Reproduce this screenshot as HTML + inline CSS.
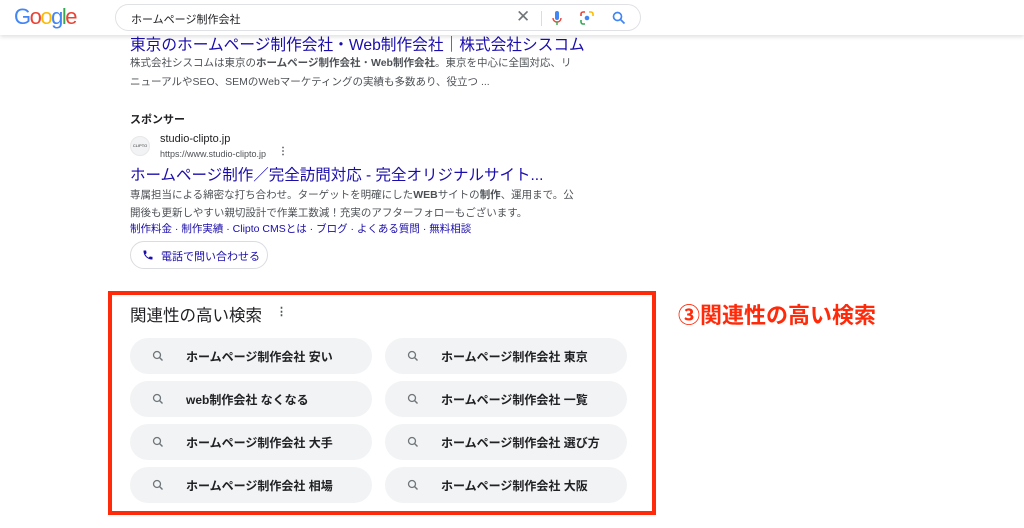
<!DOCTYPE html>
<html><head><meta charset="utf-8"><style>
*{margin:0;padding:0;box-sizing:border-box}
body{width:1024px;height:528px;overflow:hidden;background:#fff;font-family:"Liberation Sans","Noto Sans CJK JP",sans-serif;position:relative}
.a{position:absolute;white-space:nowrap}
.hdr{position:absolute;left:0;top:0;width:1024px;height:35px;background:#fff;box-shadow:0 2px 4px rgba(0,0,0,.12);z-index:2}
.sb{position:absolute;left:115px;top:4px;width:526px;height:27px;border:1px solid #dfe1e5;border-radius:14px;background:#fff}
.pill{position:absolute;width:242px;height:36px;border-radius:18px;background:#f1f3f4;font-size:12px;font-weight:bold;color:#202124}
.pill svg{position:absolute;left:22px;top:12px}
.pill span{position:absolute;left:56px;top:10px}
.g{color:#4d5156;font-size:10.5px;line-height:20px}
</style></head><body>
<div class="hdr">
<div class="a" style="left:14px;top:4px;font-size:22px;letter-spacing:-1.5px;font-family:'Liberation Sans',sans-serif"><span style="color:#4285f4">G</span><span style="color:#ea4335">o</span><span style="color:#fbbc05">o</span><span style="color:#4285f4">g</span><span style="color:#34a853">l</span><span style="color:#ea4335">e</span></div>
<div class="sb">
<div class="a" style="left:15px;top:6px;font-size:11px;color:#202124">ホームページ制作会社</div>
<div class="a" style="left:400px;top:2px;font-size:17px;color:#70757a">✕</div>
<div class="a" style="left:425px;top:6px;width:1px;height:15px;background:#dadce0"></div>
<svg class="a" style="left:436px;top:6px" width="10" height="15" viewBox="0 0 10 15"><rect x="3" y="0" width="4" height="9" rx="2" fill="#4285f4"/><path d="M1 7a4 4 0 0 0 8 0" stroke="#ea4335" stroke-width="1.4" fill="none"/><path d="M5 11v3" stroke="#34a853" stroke-width="1.4"/></svg>
<svg class="a" style="left:464px;top:6px" width="14" height="14" viewBox="0 0 14 14"><path d="M1 5V3a2 2 0 0 1 2-2h2" stroke="#ea4335" stroke-width="1.6" fill="none"/><path d="M9 1h2a2 2 0 0 1 2 2v2" stroke="#fbbc05" stroke-width="1.6" fill="none"/><path d="M1 9v2a2 2 0 0 0 2 2h2" stroke="#34a853" stroke-width="1.6" fill="none"/><circle cx="7" cy="7" r="2.3" fill="#4285f4"/></svg>
<svg class="a" style="left:496px;top:6px" width="14" height="14" viewBox="0 0 14 14"><circle cx="5.5" cy="5.5" r="4" stroke="#4285f4" stroke-width="1.7" fill="none"/><path d="M8.5 8.5l4 4" stroke="#4285f4" stroke-width="1.8"/></svg>
</div>
</div>
<div class="a" style="left:130px;top:32px;font-size:15.7px;color:#1a0dab">東京のホームページ制作会社・Web制作会社｜株式会社シスコム</div>
<div class="a g" style="left:130px;top:53px">株式会社シスコムは東京の<b>ホームページ制作会社</b>・<b>Web制作会社</b>。東京を中心に全国対応、リ</div>
<div class="a g" style="left:130px;top:72px">ニューアルやSEO、SEMのWebマーケティングの実績も多数あり、役立つ ...</div>
<div class="a" style="left:130px;top:111px;font-size:11px;font-weight:bold;color:#202124">スポンサー</div>
<div class="a" style="left:130px;top:136px;width:20px;height:20px;border-radius:50%;background:#f1f3f4;border:1px solid #e8e8e8;font-size:4px;text-align:center;line-height:18px;color:#333">CLIPTO</div>
<div class="a" style="left:160px;top:133px;font-size:11px;color:#202124">studio-clipto.jp</div>
<div class="a" style="left:160px;top:149px;font-size:9px;color:#4d5156">https://www.studio-clipto.jp</div>
<div class="a" style="left:278px;top:146px;font-size:10px;color:#4d5156;font-weight:bold">⋮</div>
<div class="a" style="left:130px;top:163px;font-size:15.5px;color:#1a0dab">ホームページ制作／完全訪問対応 - 完全オリジナルサイト...</div>
<div class="a g" style="left:130px;top:185px">専属担当による綿密な打ち合わせ。ターゲットを明確にした<b>WEB</b>サイトの<b>制作</b>、運用まで。公</div>
<div class="a g" style="left:130px;top:203px">開後も更新しやすい親切設計で作業工数減！充実のアフターフォローもございます。</div>
<div class="a" style="left:130px;top:221px;font-size:10.5px;color:#1a0dab">制作料金 · 制作実績 · Clipto CMSとは · ブログ · よくある質問 · 無料相談</div>
<div class="a" style="left:130px;top:241px;width:138px;height:28px;border:1px solid #dadce0;border-radius:14px;font-size:11px;color:#1a0dab">
<svg class="a" style="left:11px;top:7px" width="12" height="12" viewBox="0 0 24 24"><path fill="#1a0dab" d="M6.6 10.8a15 15 0 0 0 6.6 6.6l2.2-2.2c.3-.3.7-.4 1-.2 1.1.4 2.3.6 3.6.6.6 0 1 .4 1 1V20c0 .6-.4 1-1 1A17 17 0 0 1 3 4c0-.6.4-1 1-1h3.5c.6 0 1 .4 1 1 0 1.3.2 2.5.6 3.6.1.3 0 .7-.2 1z"/></svg>
<span class="a" style="left:30px;top:6px">電話で問い合わせる</span></div>
<div class="a" style="left:108px;top:291px;width:548px;height:224px;border:4px solid #ff2a0a"></div>
<div class="a" style="left:130px;top:302px;font-size:16.5px;color:#202124">関連性の高い検索</div>
<div class="a" style="left:276px;top:305px;font-size:11px;color:#4d5156;font-weight:bold">⋮</div>
<div class="a" style="left:678px;top:298px;font-size:22px;font-weight:bold;color:#ff2a0a">③関連性の高い検索</div>
<div class="pill" style="left:130px;top:338px"><svg width="12" height="12" viewBox="0 0 12 12"><circle cx="5" cy="5" r="3.5" stroke="#70757a" stroke-width="1.3" fill="none"/><path d="M7.5 7.5l3 3" stroke="#70757a" stroke-width="1.4"/></svg><span>ホームページ制作会社 安い</span></div>
<div class="pill" style="left:385px;top:338px"><svg width="12" height="12" viewBox="0 0 12 12"><circle cx="5" cy="5" r="3.5" stroke="#70757a" stroke-width="1.3" fill="none"/><path d="M7.5 7.5l3 3" stroke="#70757a" stroke-width="1.4"/></svg><span>ホームページ制作会社 東京</span></div>
<div class="pill" style="left:130px;top:381px"><svg width="12" height="12" viewBox="0 0 12 12"><circle cx="5" cy="5" r="3.5" stroke="#70757a" stroke-width="1.3" fill="none"/><path d="M7.5 7.5l3 3" stroke="#70757a" stroke-width="1.4"/></svg><span>web制作会社 なくなる</span></div>
<div class="pill" style="left:385px;top:381px"><svg width="12" height="12" viewBox="0 0 12 12"><circle cx="5" cy="5" r="3.5" stroke="#70757a" stroke-width="1.3" fill="none"/><path d="M7.5 7.5l3 3" stroke="#70757a" stroke-width="1.4"/></svg><span>ホームページ制作会社 一覧</span></div>
<div class="pill" style="left:130px;top:424px"><svg width="12" height="12" viewBox="0 0 12 12"><circle cx="5" cy="5" r="3.5" stroke="#70757a" stroke-width="1.3" fill="none"/><path d="M7.5 7.5l3 3" stroke="#70757a" stroke-width="1.4"/></svg><span>ホームページ制作会社 大手</span></div>
<div class="pill" style="left:385px;top:424px"><svg width="12" height="12" viewBox="0 0 12 12"><circle cx="5" cy="5" r="3.5" stroke="#70757a" stroke-width="1.3" fill="none"/><path d="M7.5 7.5l3 3" stroke="#70757a" stroke-width="1.4"/></svg><span>ホームページ制作会社 選び方</span></div>
<div class="pill" style="left:130px;top:467px"><svg width="12" height="12" viewBox="0 0 12 12"><circle cx="5" cy="5" r="3.5" stroke="#70757a" stroke-width="1.3" fill="none"/><path d="M7.5 7.5l3 3" stroke="#70757a" stroke-width="1.4"/></svg><span>ホームページ制作会社 相場</span></div>
<div class="pill" style="left:385px;top:467px"><svg width="12" height="12" viewBox="0 0 12 12"><circle cx="5" cy="5" r="3.5" stroke="#70757a" stroke-width="1.3" fill="none"/><path d="M7.5 7.5l3 3" stroke="#70757a" stroke-width="1.4"/></svg><span>ホームページ制作会社 大阪</span></div>
</body></html>
